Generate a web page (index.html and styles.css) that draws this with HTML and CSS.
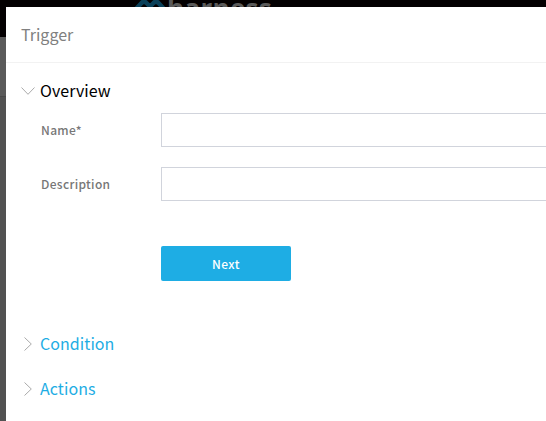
FILE: index.html
```html
<!DOCTYPE html>
<html lang="en">
<head>
<meta charset="utf-8">
<title>Trigger</title>
<link rel="stylesheet" href="styles.css">
</head>
<body>
<div class="page">
  <header class="topbar">
    <svg class="mark" viewBox="0 0 30 18"><path d="M1 11 6.500 5Q9 2.500 11.500 5L15 8.500 18.500 5Q21 2.500 23.500 5L29 11"/></svg>
    <span class="brand">harness</span>
  </header>
  <div class="subbar"></div>
</div>
<main class="modal">
  <h1 class="title">Trigger</h1>
  <section class="step">
    <h2 class="heading open"><svg class="chevron" viewBox="0 0 14 14"><path d="M.5 3.500 7 10.300 13.500 3.500"/></svg><span>Overview</span></h2>
    <form class="form">
      <label class="row"><span class="label">Name*</span><input class="field" type="text"></label>
      <label class="row"><span class="label">Description</span><input class="field" type="text"></label>
      <button class="next" type="button">Next</button>
    </form>
  </section>
  <h2 class="heading"><svg class="chevron" viewBox="0 0 14 14"><path d="M3.500 .5 10.300 7 3.500 13.500"/></svg><span>Condition</span></h2>
  <h2 class="heading"><svg class="chevron" viewBox="0 0 14 14"><path d="M3.500 .5 10.300 7 3.500 13.500"/></svg><span>Actions</span></h2>
</main>
</body>
</html>
```
FILE: styles.css
```css
* { box-sizing: border-box; }
body {
  margin: 0;
  height: 421px;
  overflow: hidden;
  background: #525252;
  font-family: "Noto Sans CJK SC", "Noto Sans", sans-serif;
}
.page { height: 421px; }
.topbar {
  display: flex;
  height: 37px;
  padding-left: 135px;
  background: #030001;
}
.mark {
  width: 30px;
  height: 18px;
  margin-top: -2px;
  fill: none;
  stroke: #0a415a;
  stroke-width: 4.5;
}
.brand {
  margin: -6px 0 0 2px;
  color: #5a5a5a;
  font: 700 26px/28px "Open Sans", sans-serif;
  letter-spacing: .3px;
}
.subbar { height: 60px; background: #5a5a5a; border-bottom: 1px solid #494949; }
.modal {
  position: absolute;
  top: 7px;
  left: 6px;
  right: 0;
  height: 414px;
  background: #fff;
}
.title {
  height: 56px;
  margin: 0;
  padding-left: 15px;
  border-bottom: 1px solid #f2f2f2;
  color: #808080;
  font-size: 16px;
  font-weight: 400;
  line-height: 55px;
}
.step { height: 258px; padding-top: 5px; }
.heading {
  display: flex;
  align-items: center;
  gap: 5px;
  height: 45px;
  margin: 0;
  padding-left: 15px;
  color: #1eade4;
  font-size: 16px;
  font-weight: 400;
  line-height: 45px;
  letter-spacing: .06px;
}
.open { color: #000; }
.chevron {
  width: 14px;
  height: 14px;
  fill: none;
  stroke: #aaa;
  stroke-width: 1;
}
.form { padding-left: 35px; }
.row {
  display: flex;
  align-items: center;
  height: 34px;
  margin-bottom: 20px;
}
.label {
  width: 120px;
  padding-bottom: 2px;
  color: #777;
  font-size: 12px;
  font-weight: 500;
  letter-spacing: .32px;
}
.field {
  flex: 1;
  min-width: 0;
  height: 34px;
  border: 1px solid #d1d4dc;
  border-right: 0;
  border-radius: 0;
  background: #fff;
}
.next {
  display: block;
  width: 130px;
  height: 35px;
  margin: 45px 0 0 120px;
  padding: 0;
  border: 0;
  border-radius: 2px;
  background: #1eade4;
  color: #fff;
  font: 500 12px/35px "Noto Sans CJK SC", sans-serif;
  letter-spacing: .4px;
}
```
